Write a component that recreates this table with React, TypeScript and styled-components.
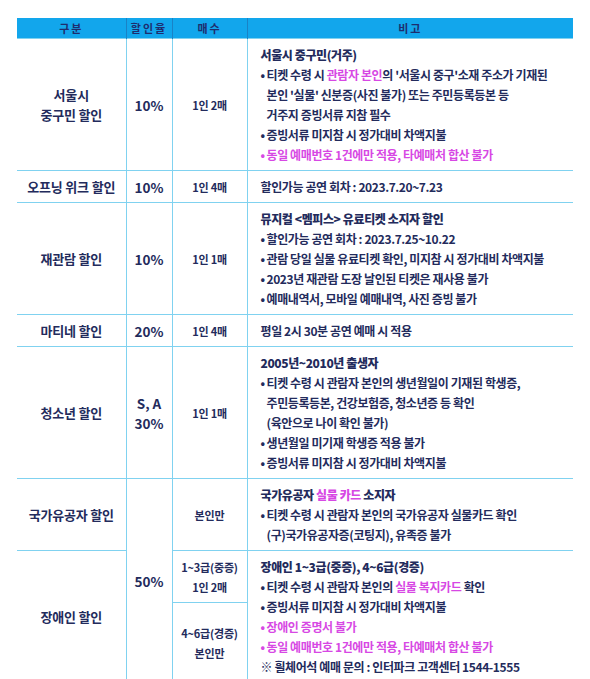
import React from 'react';
import styled, {createGlobalStyle} from 'styled-components';

const GlobalStyle = createGlobalStyle`
  html, body {
    margin: 0;
    padding: 0;
    background: #ffffff;
  }
  body {
    font-family: "Noto Sans CJK KR", "Noto Sans", sans-serif;
    color: #232b5c;
  }
`

const LINE = '#80d2f0';
const PINK = '#d748e4';

const Page = styled.div`
  padding: 18px 17px 0 17px;
`

const Table = styled.table`
  width: 556px;
  border-collapse: collapse;
  table-layout: fixed;
`

const HeadCell = styled.th<{ $last?: boolean }>`
  height: 20px;
  padding: 0;
  background: #12a6ec;
  color: #1e2d6e;
  font-size: 11px;
  font-weight: 700;
  letter-spacing: 2px;
  line-height: 20px;
  border-right: ${p => p.$last ? 'none' : '1px solid #1a82c6'};
`

const Cell = styled.td`
  padding: 0;
  border: 1px solid ${LINE};
  text-align: center;
  vertical-align: middle;
  line-height: 20px;
`

const LabelCell = styled(Cell)`
  border-left: none;
  font-size: 13px;
  font-weight: 700;
  letter-spacing: -0.2px;
`

const RateCell = styled(Cell)`
  font-size: 13.5px;
  font-weight: 700;
`

const CountCell = styled(Cell)<{ $h?: number }>`
  font-size: 11px;
  font-weight: 600;
  letter-spacing: -0.2px;
  height: ${p => p.$h ? `${p.$h}px` : 'auto'};
  box-sizing: border-box;
`

const NoteCell = styled(Cell)`
  border-right: none;
  text-align: left;
  padding: 6px 0 5px 13px;
  font-size: 12px;
  font-weight: 700;
  letter-spacing: -0.4px;
`

const Line = styled.p<{ $indent?: boolean; $pink?: boolean }>`
  margin: 0;
  white-space: nowrap;
  height: 20px;
  font-weight: 700;
  padding-left: ${p => p.$indent ? '6px' : '0'};
  color: ${p => p.$pink ? PINK : 'inherit'};
`

const Title = styled(Line)`
  font-weight: 800;
`

const Dot = styled.span`
  display: inline-block;
  width: 6px;
`

const Pink = styled.span`
  color: ${PINK};
`

const Bullet = ({children, pink}: { children: React.ReactNode; pink?: boolean }) => (
    <Line $pink={pink}><Dot>•</Dot>{children}</Line>
)

function App() {
    return (
        <Page>
            <GlobalStyle/>
            <Table>
                <colgroup>
                    <col style={{width: 109}}/>
                    <col style={{width: 46}}/>
                    <col style={{width: 75}}/>
                    <col/>
                </colgroup>
                <thead>
                <tr>
                    <HeadCell>구분</HeadCell>
                    <HeadCell>할인율</HeadCell>
                    <HeadCell>매수</HeadCell>
                    <HeadCell $last>비고</HeadCell>
                </tr>
                </thead>
                <tbody>
                <tr>
                    <LabelCell>서울시<br/>중구민 할인</LabelCell>
                    <RateCell>10%</RateCell>
                    <CountCell>1인 2매</CountCell>
                    <NoteCell>
                        <Title>서울시 중구민(거주)</Title>
                        <Bullet>티켓 수령 시 <Pink>관람자 본인</Pink>의 '서울시 중구'소재 주소가 기재된</Bullet>
                        <Line $indent>본인 '실물' 신분증(사진 불가) 또는 주민등록등본 등</Line>
                        <Line $indent>거주지 증빙서류 지참 필수</Line>
                        <Bullet>증빙서류 미지참 시 정가대비 차액지불</Bullet>
                        <Bullet pink>동일 예매번호 1건에만 적용, 타예매처 합산 불가</Bullet>
                    </NoteCell>
                </tr>
                <tr>
                    <LabelCell>오프닝 위크 할인</LabelCell>
                    <RateCell>10%</RateCell>
                    <CountCell>1인 4매</CountCell>
                    <NoteCell>
                        <Line>할인가능 공연 회차 : 2023.7.20~7.23</Line>
                    </NoteCell>
                </tr>
                <tr>
                    <LabelCell>재관람 할인</LabelCell>
                    <RateCell>10%</RateCell>
                    <CountCell>1인 1매</CountCell>
                    <NoteCell>
                        <Title>뮤지컬 &lt;멤피스&gt; 유료티켓 소지자 할인</Title>
                        <Bullet>할인가능 공연 회차 : 2023.7.25~10.22</Bullet>
                        <Bullet>관람 당일 실물 유료티켓 확인, 미지참 시 정가대비 차액지불</Bullet>
                        <Bullet>2023년 재관람 도장 날인된 티켓은 재사용 불가</Bullet>
                        <Bullet>예매내역서, 모바일 예매내역, 사진 증빙 불가</Bullet>
                    </NoteCell>
                </tr>
                <tr>
                    <LabelCell>마티네 할인</LabelCell>
                    <RateCell>20%</RateCell>
                    <CountCell>1인 4매</CountCell>
                    <NoteCell>
                        <Line>평일 2시 30분 공연 예매 시 적용</Line>
                    </NoteCell>
                </tr>
                <tr>
                    <LabelCell>청소년 할인</LabelCell>
                    <RateCell>S, A<br/>30%</RateCell>
                    <CountCell>1인 1매</CountCell>
                    <NoteCell>
                        <Title>2005년~2010년 출생자</Title>
                        <Bullet>티켓 수령 시 관람자 본인의 생년월일이 기재된 학생증,</Bullet>
                        <Line $indent>주민등록등본, 건강보험증, 청소년증 등 확인</Line>
                        <Line $indent>(육안으로 나이 확인 불가)</Line>
                        <Bullet>생년월일 미기재 학생증 적용 불가</Bullet>
                        <Bullet>증빙서류 미지참 시 정가대비 차액지불</Bullet>
                    </NoteCell>
                </tr>
                <tr>
                    <LabelCell>국가유공자 할인</LabelCell>
                    <RateCell rowSpan={3}>50%</RateCell>
                    <CountCell>본인만</CountCell>
                    <NoteCell>
                        <Title>국가유공자 <Pink>실물 카드</Pink> 소지자</Title>
                        <Bullet>티켓 수령 시 관람자 본인의 국가유공자 실물카드 확인</Bullet>
                        <Line $indent>(구)국가유공자증(코팅지), 유족증 불가</Line>
                    </NoteCell>
                </tr>
                <tr>
                    <LabelCell rowSpan={2}>장애인 할인</LabelCell>
                    <CountCell $h={52}>1~3급(중증)<br/>1인 2매</CountCell>
                    <NoteCell rowSpan={2}>
                        <Title>장애인 1~3급(중증), 4~6급(경증)</Title>
                        <Bullet>티켓 수령 시 관람자 본인의 <Pink>실물 복지카드</Pink> 확인</Bullet>
                        <Bullet>증빙서류 미지참 시 정가대비 차액지불</Bullet>
                        <Bullet pink>장애인 증명서 불가</Bullet>
                        <Bullet pink>동일 예매번호 1건에만 적용, 타예매처 합산 불가</Bullet>
                        <Line>※ 휠체어석 예매 문의 : 인터파크 고객센터 1544-1555</Line>
                    </NoteCell>
                </tr>
                <tr>
                    <CountCell>4~6급(경증)<br/>본인만</CountCell>
                </tr>
                </tbody>
            </Table>
        </Page>
    );
}

export default App;
